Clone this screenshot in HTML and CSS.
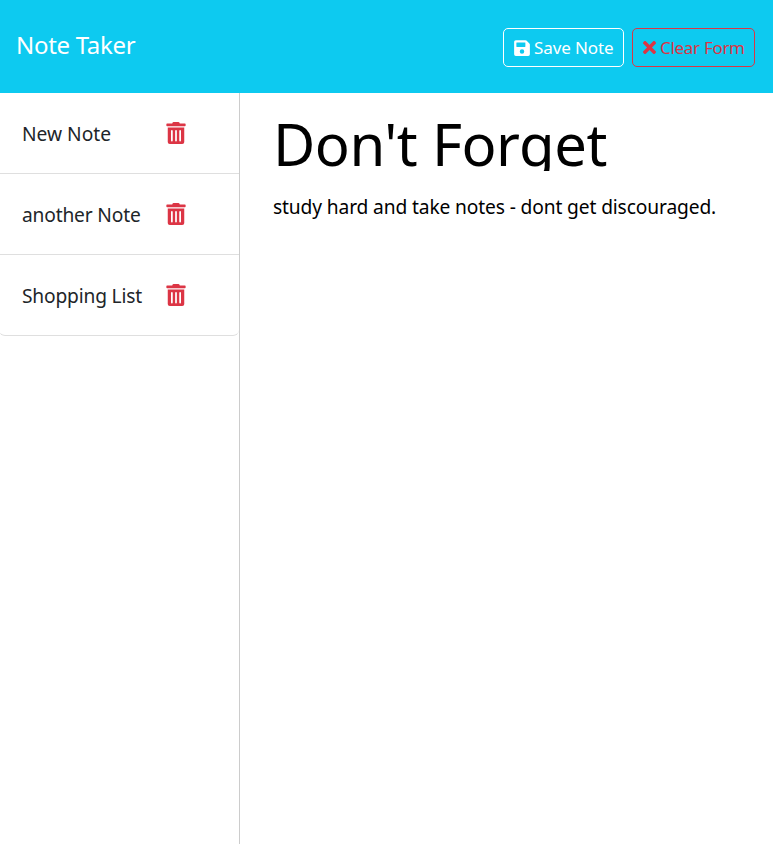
FILE: index.html
```html
<!DOCTYPE html>
<html lang="en">
<head>
<meta charset="utf-8">
<title>Note Taker</title>
<link rel="stylesheet" href="styles.css">
</head>
<body>
<svg class="defs" aria-hidden="true">
  <symbol id="trash" viewBox="0 0 448 512"><path fill-rule="evenodd" d="M32 464a48 48 0 0 0 48 48h288a48 48 0 0 0 48-48V128H32zm268-256a20 20 0 0 1 40 0v224a20 20 0 0 1-40 0zm-96 0a20 20 0 0 1 40 0v224a20 20 0 0 1-40 0zm-96 0a20 20 0 0 1 40 0v224a20 20 0 0 1-40 0zM432 32H312l-9.400-18.700A24 24 0 0 0 281.100 0H166.800a23.700 23.700 0 0 0-21.400 13.300L136 32H16A16 16 0 0 0 0 48v32a16 16 0 0 0 16 16h416a16 16 0 0 0 16-16V48a16 16 0 0 0-16-16z"/></symbol>
</svg>
<nav class="navbar">
  <a class="brand">Note Taker</a>
  <div class="actions">
    <button class="btn save"><svg viewBox="0 0 448 512"><path fill-rule="evenodd" d="M433.900 129.900l-83.900-83.900A48 48 0 0 0 316.100 32H48A48 48 0 0 0 0 80v352a48 48 0 0 0 48 48h352a48 48 0 0 0 48-48V163.900a48 48 0 0 0-14.100-34zM224 416a64 64 0 1 1 0-128 64 64 0 0 1 0 128zm96-304.500V212a12 12 0 0 1-12 12H76a12 12 0 0 1-12-12V108a12 12 0 0 1 12-12h228.500c3.200 0 6.200 1.300 8.500 3.500l3.500 3.500a12 12 0 0 1 3.500 8.500z"/></svg><span>Save Note</span></button>
    <button class="btn clear"><svg viewBox="0 0 352 512"><path d="M242.700 256l100.100-100.100c12.300-12.300 12.300-32.200 0-44.500l-22.200-22.200c-12.300-12.300-32.200-12.300-44.500 0L176 189.300 75.900 89.200c-12.300-12.300-32.200-12.300-44.500 0L9.200 111.500c-12.300 12.300-12.300 32.200 0 44.500L109.300 256 9.200 356.100c-12.300 12.300-12.300 32.200 0 44.500l22.200 22.200c12.300 12.300 32.200 12.300 44.500 0L176 322.700l100.100 100.100c12.300 12.300 32.200 12.300 44.500 0l22.200-22.200c12.300-12.300 12.300-32.200 0-44.500z"/></svg><span>Clear Form</span></button>
  </div>
</nav>
<main class="layout">
  <aside class="sidebar">
    <ul class="notes">
      <li><span class="name">New Note</span><svg class="trash"><use href="#trash"/></svg></li>
      <li><span class="name tight">another Note</span><svg class="trash"><use href="#trash"/></svg></li>
      <li><span class="name tight">Shopping List</span><svg class="trash"><use href="#trash"/></svg></li>
    </ul>
  </aside>
  <section class="editor">
    <div class="title"><span>Don't Forget</span></div>
    <p class="text"><span>study hard and take notes - dont get discouraged.</span></p>
  </section>
</main>
</body>
</html>
```
FILE: styles.css
```css
* { box-sizing: border-box; }
body { margin: 0; height: 844px; overflow: hidden; display: flex; flex-direction: column; background: #fff; color: #212529; font-family: "Segoe UI", "Noto Sans", "Open Sans", sans-serif; }
.defs { position: absolute; width: 0; height: 0; }
.navbar { height: 93px; flex: none; display: flex; justify-content: space-between; align-items: flex-start; padding: 28px 18px 0 16px; background: #0dcaf0; }
.brand { color: #fff; font-size: 24px; line-height: 34px; letter-spacing: -0.300px; }
.actions { display: flex; gap: 8px; }
.btn { height: 39px; display: flex; align-items: center; padding: 0 0 0 10px; border: 1px solid; border-radius: 5px; background: none; font: 17px/24px "Segoe UI", "Noto Sans", sans-serif; white-space: nowrap; }
.btn svg { height: 18px; fill: currentColor; flex: none; }
.save { width: 121px; color: #fff; letter-spacing: -0.100px; }
.save svg { width: 16px; margin-right: 4px; }
.clear { width: 123px; color: #dc3545; letter-spacing: -0.300px; }
.clear svg { width: 13px; height: 19px; margin-right: 4px; }
.layout { flex: 1; display: flex; }
.sidebar { width: 240px; border-right: 1px solid #ccc; }
.notes { list-style: none; margin: 0 0 0 -1px; padding: 0; border-radius: 0 0 6px 6px; overflow: hidden; border-bottom: 1px solid #dfdfdf; }
.notes li { height: 81px; display: flex; align-items: center; padding-left: 23px; border-bottom: 1px solid #dfdfdf; }
.notes li:last-child { height: 80px; border-bottom: 0; }
.name { width: 144px; font-size: 19.200px; white-space: nowrap; }
.tight { letter-spacing: -0.180px; }
.trash { width: 20px; height: 22px; fill: #dc3545; }
.editor { flex: 1; padding: 24px 0 0 33px; color: #000; }
.title { height: 54px; overflow: hidden; font-size: 58px; line-height: 54px; letter-spacing: -0.480px; white-space: nowrap; }
.text { margin: 21px 0 0; font-size: 19.200px; line-height: 29px; letter-spacing: -0.130px; white-space: nowrap; }
```
